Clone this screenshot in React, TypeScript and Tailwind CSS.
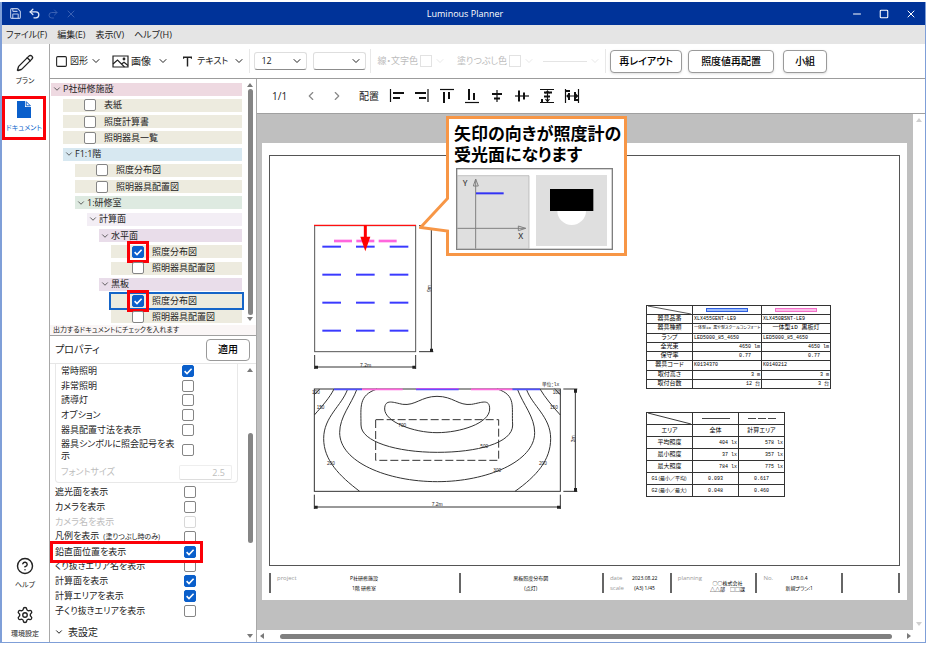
import React from "react";
import { ChevronDown, ChevronLeft, ChevronRight, CircleHelp, Minus, Pencil, Redo2, Save, Settings, Square, Undo2, X } from "lucide-react";

const pink = "bg-[#eed9e1]";
const beige = "bg-[#edebdf]";
const blue = "bg-[#d7e8f1]";
const green = "bg-[#deeae1]";
const lilac = "bg-[#e9ddea]";

type TreeItem = {
  label: string;
  indent: string;
  color: string;
  leaf?: boolean;
  checked?: boolean;
  selected?: boolean;
};

const tree: TreeItem[] = [
  { label: "P社研修施設", indent: "ml-0", color: pink },
  { label: "表紙", indent: "ml-3", color: beige, leaf: true },
  { label: "照度計算書", indent: "ml-3", color: beige, leaf: true },
  { label: "照明器具一覧", indent: "ml-3", color: beige, leaf: true },
  { label: "F1:1階", indent: "ml-3", color: blue },
  { label: "照度分布図", indent: "ml-6", color: beige, leaf: true },
  { label: "照明器具配置図", indent: "ml-6", color: beige, leaf: true },
  { label: "1:研修室", indent: "ml-6", color: green },
  { label: "計算面", indent: "ml-9", color: "bg-[#f3eef5]" },
  { label: "水平面", indent: "ml-12", color: lilac },
  { label: "照度分布図", indent: "ml-15", color: beige, leaf: true, checked: true },
  { label: "照明器具配置図", indent: "ml-15", color: beige, leaf: true },
  { label: "黒板", indent: "ml-12", color: lilac },
  { label: "照度分布図", indent: "ml-15", color: beige, leaf: true, checked: true, selected: true },
  { label: "照明器具配置図", indent: "ml-15", color: beige, leaf: true },
];

function Check({ id, checked, disabled, marked }: { id: string; checked?: boolean; disabled?: boolean; marked?: boolean }) {
  return (
    <span className="relative block h-3 w-3 shrink-0">
      <input
        id={id}
        type="checkbox"
        defaultChecked={checked}
        disabled={disabled}
        className="peer block h-3 w-3 appearance-none rounded-[2px] border border-[#858585] bg-white checked:border-[#0a5fcb] checked:bg-[#0a5fcb] disabled:border-[#d8d8d8]"
      />
      <svg viewBox="0 0 12 12" className="pointer-events-none absolute inset-0 hidden h-3 w-3 peer-checked:block" fill="none" stroke="white" strokeWidth="1.6">
        <path d="M2.6 6.2 5 8.5 9.6 3.8" />
      </svg>
      {marked && <span className="pointer-events-none absolute -inset-[5px] border-3 border-[#fb0007]" />}
    </span>
  );
}

function TreeRow({ item, index }: { item: TreeItem; index: number }) {
  const id = `doc-${index}`;
  return (
    <li className={`flex flex-1 items-center ${item.indent}`}>
      {item.leaf ? (
        <div className={`flex w-full items-center pl-[21px] ${item.color} ${item.selected ? "h-[14px] outline-2 outline-[#1565c8]" : "h-[13px]"}`}>
          <Check id={id} checked={item.checked} marked={item.checked} />
          <label htmlFor={id} className="ml-2 text-[9px] leading-3 whitespace-nowrap">{item.label}</label>
        </div>
      ) : (
        <button type="button" className={`flex h-[13px] w-full items-center gap-px pl-px text-[9px] leading-3 whitespace-nowrap ${item.color}`}>
          <ChevronDown size={10} strokeWidth={2} className="text-[#444]" />
          {item.label}
        </button>
      )}
    </li>
  );
}

function Scrollbar({ thumb, faint }: { thumb?: string; faint?: boolean }) {
  const arrow = faint ? "fill-[#cfcfcf]" : "fill-[#7a7a7a]";
  return (
    <div className="flex w-3 shrink-0 flex-col items-center bg-white py-1">
      <svg viewBox="0 0 6 4" className={`h-1 w-[6px] shrink-0 ${arrow}`}><path d="M0 4 3 0l3 4z" /></svg>
      <div className="flex w-full flex-1 flex-col items-center py-[2px]">
        {thumb && <div className={`w-[5px] rounded-full bg-[#858585] ${thumb}`} />}
      </div>
      <svg viewBox="0 0 6 4" className={`h-1 w-[6px] shrink-0 ${arrow}`}><path d="M0 0h6L3 4z" /></svg>
    </div>
  );
}

function PropRow({ id, label, note, checked, disabled }: { id: string; label: string; note?: string; checked?: boolean; disabled?: boolean }) {
  return (
    <div className="flex flex-1 items-center justify-between">
      <label htmlFor={id} className={`w-[115px] text-[9px] leading-3 [word-break:break-all] ${note ? "whitespace-nowrap" : ""} ${disabled ? "text-[#bdbdbd]" : ""}`}>
        {label}
        {note && <span className="ml-1 text-[7px]">{note}</span>}
      </label>
      <Check id={id} checked={checked} disabled={disabled} />
    </div>
  );
}

function TitleBar() {
  return (
    <header className="grid h-[23px] shrink-0 grid-cols-[1fr_auto_1fr] items-center bg-[#003399] pr-1 pl-[7px] text-white">
      <div className="flex items-center gap-[6px]">
        <button type="button" aria-label="保存"><Save size={13} strokeWidth={2} className="text-[#b8c7e8]" /></button>
        <button type="button" aria-label="元に戻す"><Undo2 size={13} strokeWidth={2.4} className="text-[#e2e9f7]" /></button>
        <button type="button" aria-label="やり直し"><Redo2 size={12} strokeWidth={2} className="text-[#3a61b3]" /></button>
        <button type="button" aria-label="削除"><X size={12} strokeWidth={2} className="text-[#3a61b3]" /></button>
      </div>
      <h1 className="text-[9px] font-medium">Luminous Planner</h1>
      <div className="flex items-center justify-end gap-4 pr-1">
        <button type="button" aria-label="最小化"><Minus size={12} strokeWidth={2} /></button>
        <button type="button" aria-label="最大化"><Square size={10} strokeWidth={2.6} /></button>
        <button type="button" aria-label="閉じる"><X size={12} strokeWidth={2} /></button>
      </div>
    </header>
  );
}

function SideNav() {
  const item = "flex flex-col items-center text-[7px] leading-[10px] whitespace-nowrap";
  return (
    <nav className="flex w-[48px] shrink-0 flex-col border-r border-[#a8a8a8] bg-white">
      <button type="button" className={`${item} mt-[10px] mr-px gap-1`}>
        <Pencil size={18} strokeWidth={1.8} />
        プラン
      </button>
      <button type="button" className={`${item} mt-[10px] mr-[3px] h-[44px] gap-[5px] border-3 border-[#fb0007] pt-[2px] text-[#0a5fcb]`}>
        <svg viewBox="0 0 14 17" className="h-[17px] w-[14px]">
          <path d="M0 0h8v6h6v11H0z" fill="#0a5fcb" />
          <path d="M9.2 .6v4.2h4.2z" fill="none" stroke="#0a5fcb" strokeWidth="1" />
        </svg>
        ドキュメント
      </button>
      <button type="button" className={`${item} mt-auto mr-px gap-[5px]`}>
        <CircleHelp size={18} strokeWidth={1.9} />
        ヘルプ
      </button>
      <button type="button" className={`${item} mt-4 mr-px mb-[3px] gap-[5px]`}>
        <Settings size={18} strokeWidth={1.8} />
        環境設定
      </button>
    </nav>
  );
}

function Drop({ label, value, className }: { label: string; value: string; className: string }) {
  return (
    <span className={`relative block w-[53px] ${className}`}>
      <select aria-label={label} defaultValue={value} className="block h-[18px] w-full appearance-none rounded-[3px] border border-[#dedede] border-b-[#8c8c8c] bg-white pl-[6px] text-[9px]">
        <option>{value}</option>
      </select>
      <ChevronDown size={12} strokeWidth={2} className="pointer-events-none absolute top-[3px] right-1" />
    </span>
  );
}

function Toolbar() {
  const tool = "flex items-center text-[9px] whitespace-nowrap";
  const action = "h-[23px] rounded-[4px] border border-[#9a9a9a] bg-white text-[10px] font-medium text-black shadow-sm whitespace-nowrap";
  return (
    <div className="flex h-[35px] shrink-0 items-center border-b border-[#9c9c9c] bg-white pl-[5px]">
      <button type="button" className={`${tool} gap-[2px]`}>
        <Square size={13} strokeWidth={2} />図形<ChevronDown size={12} strokeWidth={2} />
      </button>
      <button type="button" className={`${tool} ml-[10px] gap-[2px]`}>
        <svg viewBox="0 0 17 13" className="h-[13px] w-[17px]" fill="none" stroke="currentColor" strokeWidth="1.2">
          <path d="M1 1h15v11H1z" />
          <path d="M1 9 5.500 5l7 7M9.500 9 12 7.200l4 3.300" />
          <circle cx="12" cy="4" r=".8" />
        </svg>
        <span className="text-[10px]">画像</span><ChevronDown size={12} strokeWidth={2} className="ml-1" />
      </button>
      <button type="button" className={`${tool} ml-[14px] gap-[5px]`}>
        <svg viewBox="0 0 10 12" className="h-[11px] w-[9px]" fill="none" stroke="currentColor" strokeWidth="1.6">
          <path d="M.5 3V1.200h9V3M5 1v10.500" />
        </svg>
        テキスト<ChevronDown size={12} strokeWidth={2} />
      </button>
      <span className="ml-1 h-6 w-px bg-[#e8e8e8]" />
      <Drop label="文字サイズ" value="12" className="ml-1" />
      <Drop label="線種" value="" className="ml-[6px]" />
      <span className="ml-1 h-6 w-px bg-[#e8e8e8]" />
      <button type="button" disabled className={`${tool} ml-[6px] gap-[2px] text-[8px] text-[#bcbcbc]`}>
        線・文字色<span className="h-3 w-3 border border-[#e2e2e2]" /><ChevronDown size={12} strokeWidth={1.4} className="text-[#dedede]" />
      </button>
      <button type="button" disabled className={`${tool} ml-[11px] gap-[2px] text-[8px] text-[#bcbcbc]`}>
        塗りつぶし色<span className="h-3 w-3 border border-[#e2e2e2]" /><ChevronDown size={12} strokeWidth={1.4} className="text-[#dedede]" />
      </button>
      <button type="button" disabled aria-label="線の太さ" className={`${tool} ml-2 gap-[2px]`}>
        <span className="h-px w-11 bg-[#e4e4e4]" /><ChevronDown size={12} strokeWidth={1.4} className="text-[#dedede]" />
      </button>
      <span className="ml-1 h-6 w-px bg-[#e8e8e8]" />
      <button type="button" className={`${action} ml-1 w-[72px]`}>再レイアウト</button>
      <button type="button" className={`${action} ml-[6px] w-[86px]`}>照度値再配置</button>
      <button type="button" className={`${action} ml-[9px] w-[44px]`}>小組</button>
    </div>
  );
}

function LeftPanel() {
  return (
    <aside className="flex w-[207px] shrink-0 flex-col border-r border-[#a8a8a8] bg-white">
      <section className="flex h-[246px] shrink-0">
        <ul className="flex flex-1 flex-col pt-[2px] pl-px">
          {tree.map((item, i) => <TreeRow key={i} item={item} index={i} />)}
        </ul>
        <div className="w-[2px]" />
        <Scrollbar thumb="flex-1" />
      </section>
      <p className="h-[10px] shrink-0 bg-[#faf6f6] pl-[3px] text-[7px] leading-[10px]">出力するドキュメントにチェックを入れます</p>
      <section className="flex min-h-0 flex-1 flex-col border-t border-[#a0a0a0]">
        <div className="flex h-[28px] shrink-0 items-center justify-between border-b border-[#e6e6e6] pr-[6px] pl-[5px]">
          <h2 className="text-[10px]">プロパティ</h2>
          <button type="button" className="h-[22px] w-[44px] rounded-[4px] border border-[#9a9a9a] text-[10px] font-medium text-black">適用</button>
        </div>
        <div className="flex min-h-0 flex-1">
          <div className="flex-1 pl-[5px]">
            <div className="mr-[6px] rounded-b-[4px] border border-t-0 border-[#e8e8e8] pb-[1px] pl-[5px]">
              <div className="mr-[43px] flex h-[73px] flex-col">
                <PropRow id="p-usual" label="常時照明" checked />
                <PropRow id="p-emergency" label="非常照明" />
                <PropRow id="p-guide" label="誘導灯" />
                <PropRow id="p-option" label="オプション" />
                <PropRow id="p-dim" label="器具配置寸法を表示" />
              </div>
              <div className="mr-[43px] flex h-[26px]">
                <PropRow id="p-symbol" label="器具シンボルに照会記号を表示" />
              </div>
              <div className="flex h-[18px] items-center justify-between pr-[5px] text-[#bdbdbd]">
                <label htmlFor="p-size" className="text-[9px]">フォントサイズ</label>
                <input id="p-size" disabled defaultValue="2.5" className="h-[15px] w-[53px] rounded-[2px] border border-[#eeeeee] border-b-[#dddddd] pr-[6px] text-right text-[9px]" />
              </div>
            </div>
            <div className="relative mt-[2px] mr-[48px] flex h-[133px] flex-col">
              <PropRow id="p-shade" label="遮光面を表示" />
              <PropRow id="p-camera" label="カメラを表示" />
              <PropRow id="p-camname" label="カメラ名を表示" disabled />
              <PropRow id="p-legend" label="凡例を表示" note="(塗りつぶし時のみ)" />
              <PropRow id="p-vertical" label="鉛直面位置を表示" checked />
              <PropRow id="p-hole" label="くり抜きエリア名を表示" />
              <PropRow id="p-plane" label="計算面を表示" checked />
              <PropRow id="p-area" label="計算エリアを表示" checked />
              <PropRow id="p-subhole" label="子くり抜きエリアを表示" />
              <span className="pointer-events-none absolute top-[56px] -right-[7px] -left-[5px] h-[22px] border-3 border-[#fb0007]" />
            </div>
            <button type="button" className="mt-[7px] -ml-px flex items-center gap-1 text-[10px] leading-[14px]">
              <ChevronDown size={10} strokeWidth={2.4} />表設定
            </button>
          </div>
          <Scrollbar thumb="mt-[59px] h-[110px]" />
        </div>
      </section>
    </aside>
  );
}

const alignTools: { name: string; d: string }[] = [
  { name: "左揃え", d: "M1.500 1v13|M4 5h11M4 10h7" },
  { name: "右揃え", d: "M14 1v13|M1 5h11M5 10h7" },
  { name: "上揃え", d: "M1 1.500h14|M5 4v11M10 4v7" },
  { name: "下揃え", d: "M1 14.500h14|M5 1v11M10 5v7" },
  { name: "左右中央揃え", d: "M8 2v12|M3 6h10M5 10.500h6" },
  { name: "上下中央揃え", d: "M1 8h14|M5 2.500v11M10 4.500v7" },
  { name: "縦に整列", d: "M1 1.500h14M1 14.500h14M8.500 4v9M6.500 5.500 8.500 3l2 2.500M6.500 11l2 2.500 2-2.500|M5 4.500h8M5 8.500h6M3 11v3" },
  { name: "横に整列", d: "M1.500 1v14M14.500 1v14M3 8h11M5 6 3 8l2 2M11.500 6l2 2-2 2|M2 3h4M5 5v7M11 4v9M11 12h3" },
];

function AlignIcon({ d }: { d: string }) {
  const [thin, thick] = d.split("|");
  return (
    <svg viewBox="0 0 16 16" className="h-4 w-4" fill="none" stroke="#111">
      <path d={thin} strokeWidth="1.2" />
      <path d={thick} strokeWidth="2" />
    </svg>
  );
}

function PlanFigure() {
  const xs = [97, 198, 299];
  const ys = [110, 194, 278, 362];
  return (
    <svg viewBox="0 0 480 510" className="absolute top-[54px] left-5 h-[170px] w-[160px]" fill="none" fontFamily="'Liberation Sans', sans-serif">
      <rect x="74" y="47" width="303" height="378" stroke="#555" strokeWidth="3" />
      <path d="M72 46h306" stroke="#ff1010" strokeWidth="4" />
      {[132, 199, 266].map((x) => <path key={x} d={`M${x} 93h54`} stroke="#ff66dd" strokeWidth="8" />)}
      {ys.map((y) => xs.map((x) => <path key={`${x}-${y}`} d={`M${x} ${y}h56`} stroke="#3a3aff" strokeWidth="6" />))}
      <path d="M226 46v40" stroke="#ff0000" strokeWidth="9" />
      <path d="M211 80h30l-15 44z" fill="#ff0000" />
      <path d="M387 425h43M387 47h43M424 47v378M74 435v42M377 435v42M74 471h303" stroke="#333" strokeWidth="3" />
      <path d="M420 47h9v10h-9zM420 416h9v10h-9zM74 467h10v9H74zM367 467h10v9h-10z" fill="#222" />
      <text x="210" y="470" fontSize="15" fill="#222">7.2m</text>
      <text x="0" y="0" fontSize="15" fill="#222" transform="translate(422 246) rotate(-90)">9m</text>
    </svg>
  );
}

function ContourFigure() {
  const labels: [string, number, number][] = [
    ["100", 66, 72], ["150", 80, 117], ["200", 111, 285], ["300", 610, 307], ["500", 571, 235],
    ["700", 325, 170], ["200", 747, 285], ["150", 780, 117], ["100", 788, 72],
  ];
  return (
    <svg viewBox="0 0 900 450" className="absolute top-[214px] left-5 h-[150px] w-[300px]" fill="none" stroke="#333" strokeWidth="3" fontFamily="'Liberation Sans', sans-serif">
      <rect x="73" y="57" width="738" height="307" />
      <rect x="257" y="149" width="369" height="122" strokeDasharray="24 9" />
      <path d="M132 57C120 82 95 110 73 135M89 57 73 74" />
      <path d="M750 57C765 82 788 110 811 135M794 57 811 74" />
      <path d="M173 57C155 108 101 140 101 206C101 270 148 318 209 364" />
      <path d="M709 57C727 108 782 140 782 206C782 270 740 318 675 364" />
      <path d="M201 57C183 105 149 140 149 188C149 275 290 335 442 335C590 335 734 275 734 188C734 140 700 105 682 57" />
      <path d="M261 57C205 76 213 110 213 165C213 215 320 247 442 247C560 247 668 220 668 165C664 110 680 76 622 57" />
      <path d="M284 117C284 85 312 98 338 103C375 108 395 79 441 79C490 79 505 108 545 103C575 98 599 85 599 117C599 160 510 188 441 188C370 188 284 155 284 117Z" />
      <path d="M132 58h84M378 58h128M667 58h83" stroke="#5050ff" strokeWidth="5" />
      <path d="M216 58h122M543 58h124" stroke="#ff66dd" strokeWidth="5" />
      <path d="M378 56h128" stroke="#cc55ee" strokeWidth="3" />
      <path d="M820 57h42M820 364h42M856 57v307M73 374v43M811 374v43M73 411h738" />
      <g fill="#222" stroke="none">
        <path d="M852 57h9v11h-9zM852 354h9v11h-9zM73 407h10v9H73zM801 407h10v9h-10z" />
        {labels.map(([t, x, y], i) => <text key={i} x={x} y={y} fontSize="14">{t}</text>)}
        <text x="425" y="409" fontSize="15">7.2m</text>
        <text x="756" y="49" fontSize="14" fontFamily="'Liberation Mono', 'Noto Sans CJK JP', monospace">単位：lx</text>
        <text transform="translate(854 217) rotate(-90)" fontSize="15">3m</text>
      </g>
    </svg>
  );
}

const fixtures: [string, string, string, string][] = [
  ["器具品番", "XLX455GENT-LE9", "XLX450BSNT-LE9", "text-left"],
  ["器具種類", "一体型iD 黒や型スクールコンフォート", "一体型iD 黒板灯", "text-center"],
  ["ランプ", "LED5000_85_4650", "LED5000_85_4650", "text-left"],
  ["全光束", "4650 lm", "4650 lm", "text-right"],
  ["保守率", "0.77\u00a0\u00a0\u00a0", "0.77\u00a0\u00a0\u00a0", "text-right"],
  ["器具コード", "K0134370", "K0140212", "text-left"],
  ["取付高さ", "3 m", "3 m", "text-right"],
  ["取付台数", "12 台", "3 台", "text-right"],
];

const results: [string, string, string, string][] = [
  ["平均照度", "404 lx", "578 lx", "text-right"],
  ["最小照度", "37 lx", "357 lx", "text-right"],
  ["最大照度", "784 lx", "775 lx", "text-right"],
  ["G1（最小／平均）", "0.093", "0.617", "text-center"],
  ["G2（最小／最大）", "0.048", "0.460", "text-center"],
];

const cadFont = "font-['Liberation_Mono','Noto_Sans_CJK_JP',monospace]";
const cell = "border border-[#333] px-px py-0 font-normal whitespace-nowrap overflow-hidden";

function Diagonal({ height }: { height: string }) {
  return (
    <svg viewBox="0 0 46 11" preserveAspectRatio="none" className={`block w-full ${height}`} stroke="#333">
      <path d="M0 0 46 11" />
    </svg>
  );
}

function FixtureTable() {
  return (
    <table className={`absolute top-[149px] left-[376px] h-[84px] w-[185px] table-fixed border-collapse text-[5px] leading-[6px] text-black ${cadFont}`}>
      <thead>
        <tr>
          <th className={`${cell} w-[46px] p-0`}><Diagonal height="h-2" /></th>
          <th className={cell}><div className="mx-auto h-1 w-[42px] border border-[#2f5fe0] bg-[#9dbcf8]" /></th>
          <th className={cell}><div className="mx-auto h-1 w-[42px] border border-[#f26fc8] bg-[#f9c0e8]" /></th>
        </tr>
      </thead>
      <tbody>
        {fixtures.map(([name, a, b, align]) => (
          <tr key={name}>
            <th className={`${cell} text-center text-[6px]`}>{name}</th>
            <td className={`${cell} ${align} ${a.length > 16 ? "text-[4px]" : ""}`}>{a}</td>
            <td className={`${cell} ${align} ${align === "text-center" ? "text-[6px]" : ""}`}>{b}</td>
          </tr>
        ))}
      </tbody>
    </table>
  );
}

function ResultTable() {
  return (
    <table className={`absolute top-[256px] left-[376px] w-[139px] table-fixed border-collapse text-[5px] leading-[6px] text-black ${cadFont}`}>
      <thead>
        <tr className="h-3">
          <th className={`${cell} p-0`}><Diagonal height="h-[11px]" /></th>
          <th className={cell}><div className="mx-auto h-px w-7 bg-[#444]" /></th>
          <th className={cell}>
            <div className="mx-auto flex w-7 justify-between">
              <span className="h-px w-2 bg-[#444]" /><span className="h-px w-2 bg-[#444]" /><span className="h-px w-2 bg-[#444]" />
            </div>
          </th>
        </tr>
        <tr className="h-3">
          <th className={`${cell} text-[6px]`}>エリア</th>
          <th className={`${cell} text-[6px]`}>全体</th>
          <th className={`${cell} text-[6px]`}>計算エリア</th>
        </tr>
      </thead>
      <tbody>
        {results.map(([name, a, b, align]) => (
          <tr key={name} className="h-3">
            <th className={`${cell} text-center ${align === "text-right" ? "text-[6px]" : ""}`}>{name}</th>
            <td className={`${cell} ${align}`}>{a}</td>
            <td className={`${cell} ${align}`}>{b}</td>
          </tr>
        ))}
      </tbody>
    </table>
  );
}

function TitleBlock() {
  const box = "flex gap-2 border-l-2 border-[#666] pl-[6px] leading-[10px]";
  const tag = "text-[6px] text-[#999]";
  return (
    <footer className="mt-[7px] grid h-5 grid-cols-[191fr_143fr_68fr_86fr_86fr_57fr] border-r-2 border-[#666] text-[5px] whitespace-nowrap text-black">
      <div className={box}>
        <span className={tag}>project</span>
        <div className="flex-1 pr-9 text-center">P社研修施設<br />1階 研修室</div>
      </div>
      <div className={`${box} justify-center`}><div className="pr-2 text-center">黒板照度分布図<br />(点灯)</div></div>
      <div className={box}>
        <div className={tag}>date<br />scale</div>
        <div className="text-center">2023.08.22<br />(A3) 1/45</div>
      </div>
      <div className={`${box} gap-0`}>
        <span className={tag}>planning</span>
        <div className="pt-[7px] text-center leading-[6px]">○○株式会社<br />△△部　□□課</div>
      </div>
      <div className={box}>
        <span className={tag}>No.</span>
        <div className="flex-1 pr-6 text-center">LP8.0.4<br />新規プラン:1</div>
      </div>
      <div className={box} />
    </footer>
  );
}

function Callout() {
  return (
    <div className="absolute top-[37px] left-[162px] h-[140px] w-[208px]">
      <svg viewBox="0 0 208 140" className="absolute inset-0 h-full w-full">
        <path d="M28.500 1.500H206.500V138.500H28.500V115L1.500 111.500 28.500 82.500Z" fill="white" stroke="#f79646" strokeWidth="3" />
      </svg>
      <div className="relative flex h-full flex-col pt-[7px] pl-[35px]">
        <p className="text-[17px] leading-[21px] font-bold whitespace-nowrap text-black">矢印の向きが照度計の<br />受光面になります</p>
        <svg viewBox="78 189 471 246" className="mt-[3px] ml-[2px] h-[82px] w-[157px]" fill="none" fontFamily="'Open Sans', sans-serif">
          <rect x="80" y="191" width="467" height="242" fill="white" stroke="#7f7f7f" strokeWidth="4" />
          <path d="M82 212h215v219H82z" fill="#dfdfdf" stroke="#aaa" strokeWidth="2" />
          <path d="M318 210h213v213H318z" fill="#dfdfdf" />
          <path d="M137 431V222M130 243l7-21 8 21zM82 370h205M265 363l22 7-22 7z" stroke="#808080" strokeWidth="3" />
          <path d="M138 265h83" stroke="#3333f5" strokeWidth="6" />
          <circle cx="425" cy="317" r="43" fill="white" />
          <path d="M360 252h130v66H360z" fill="black" />
          <text x="98" y="243" fontSize="24" fontWeight="600" fill="#444">Y</text>
          <text x="265" y="402" fontSize="24" fontWeight="600" fill="#444">X</text>
        </svg>
      </div>
    </div>
  );
}

function DocumentView() {
  return (
    <main className="relative flex min-w-0 flex-1 flex-col">
      <div className="flex h-[35px] shrink-0 items-center border-b border-[#a0a0a0] bg-white pl-[15px]">
        <span className="w-[32px] text-[10px]">1/1</span>
        <button type="button" aria-label="前のページ" className="text-[#888]"><ChevronLeft size={14} strokeWidth={2} /></button>
        <button type="button" aria-label="次のページ" className="ml-3 text-[#888]"><ChevronRight size={14} strokeWidth={2} /></button>
        <span className="ml-[15px] text-[10px]">配置</span>
        <div className="ml-[10px] flex gap-[9px]">
          {alignTools.map((t) => (
            <button key={t.name} type="button" aria-label={t.name}><AlignIcon d={t.d} /></button>
          ))}
        </div>
      </div>
      <div className="flex min-h-0 flex-1">
        <div className="min-w-0 flex-1 bg-[#bfbfbf] pt-[29px] pr-[6px] pl-[5px]">
          <article className="bg-white px-[7px] pt-3 pb-[7px]">
            <div className="relative h-[411px] border border-[#555]">
              <PlanFigure />
              <ContourFigure />
              <FixtureTable />
              <ResultTable />
            </div>
            <TitleBlock />
          </article>
        </div>
        <Scrollbar faint />
      </div>
      <div className="flex h-3 shrink-0 items-center bg-white pr-[14px] pl-[3px]">
        <svg viewBox="0 0 4 6" className="h-[6px] w-1 fill-[#7a7a7a]"><path d="M4 0v6L0 3z" /></svg>
        <div className="mr-[15px] ml-4 h-[5px] flex-1 rounded-full bg-[#808080]" />
        <svg viewBox="0 0 4 6" className="h-[6px] w-1 fill-[#7a7a7a]"><path d="M0 0v6l4-3z" /></svg>
      </div>
      <Callout />
    </main>
  );
}

export default function App() {
  return (
    <div className="h-screen overflow-hidden bg-white pt-[2px] pr-[3px] pb-[5px] font-['Open_Sans','Noto_Sans_CJK_JP',sans-serif] text-[#222] [font-feature-settings:'palt']">
      <div className="flex h-full flex-col border-r border-b border-l-2 border-[#7f9fd8]">
        <TitleBar />
        <div className="flex h-[19px] shrink-0 items-center gap-[10px] bg-[#e5e5e5] pl-1 text-[9px]">
          <button type="button">ファイル(F)</button>
          <button type="button">編集(E)</button>
          <button type="button">表示(V)</button>
          <button type="button">ヘルプ(H)</button>
        </div>
        <div className="flex min-h-0 flex-1">
          <SideNav />
          <div className="flex min-w-0 flex-1 flex-col">
            <Toolbar />
            <div className="flex min-h-0 flex-1">
              <LeftPanel />
              <DocumentView />
            </div>
          </div>
        </div>
      </div>
    </div>
  );
}
